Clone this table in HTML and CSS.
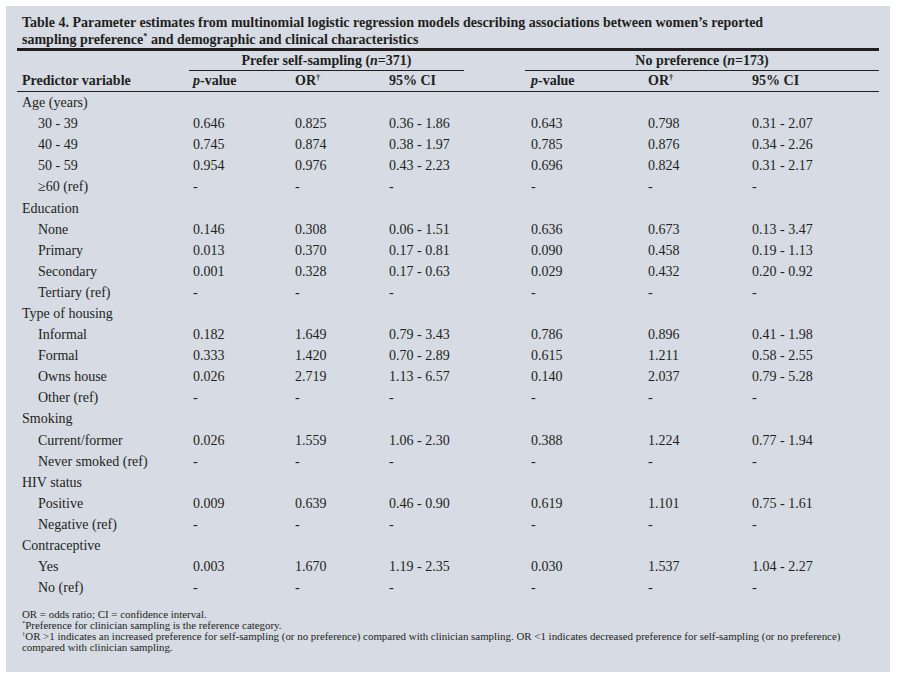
FILE: index.html
```html
<!DOCTYPE html>
<html>
<head>
<meta charset="utf-8">
<link rel="stylesheet" href="styles.css">
</head>
<body>
<div class="panel">
  <h1 class="title">Table 4. Parameter estimates from multinomial logistic regression models describing associations between women’s reported<br>sampling preference<sup>*</sup> and demographic and clinical characteristics</h1>
  <table class="tbl">
    <colgroup>
      <col class="c-label"><col class="c-p1"><col class="c-or1"><col class="c-ci1"><col class="c-gap"><col class="c-p2"><col class="c-or2"><col class="c-ci2">
    </colgroup>
    <thead>
      <tr class="hrow1">
        <th></th>
        <th colspan="3" class="grp"><div class="grp-line g1">Prefer self-sampling (<i>n</i>=371)</div></th>
        <th></th>
        <th colspan="3" class="grp"><div class="grp-line g2">No preference (<i>n</i>=173)</div></th>
      </tr>
      <tr class="hrow2">
        <th class="lbl">Predictor variable</th>
        <th><i>p</i>-value</th>
        <th>OR<sup>†</sup></th>
        <th>95% CI</th>
        <th></th>
        <th class="p2"><i>p</i>-value</th>
        <th>OR<sup>†</sup></th>
        <th>95% CI</th>
      </tr>
    </thead>
    <tbody>
      <tr><td class="lbl">Age (years)</td><td></td><td></td><td></td><td></td><td class="p2"></td><td></td><td></td></tr>
      <tr><td class="sub">30 - 39</td><td>0.646</td><td>0.825</td><td>0.36 - 1.86</td><td></td><td class="p2">0.643</td><td>0.798</td><td>0.31 - 2.07</td></tr>
      <tr><td class="sub">40 - 49</td><td>0.745</td><td>0.874</td><td>0.38 - 1.97</td><td></td><td class="p2">0.785</td><td>0.876</td><td>0.34 - 2.26</td></tr>
      <tr><td class="sub">50 - 59</td><td>0.954</td><td>0.976</td><td>0.43 - 2.23</td><td></td><td class="p2">0.696</td><td>0.824</td><td>0.31 - 2.17</td></tr>
      <tr><td class="sub">≥60 (ref)</td><td>-</td><td>-</td><td>-</td><td></td><td class="p2">-</td><td>-</td><td>-</td></tr>
      <tr><td class="lbl">Education</td><td></td><td></td><td></td><td></td><td class="p2"></td><td></td><td></td></tr>
      <tr><td class="sub">None</td><td>0.146</td><td>0.308</td><td>0.06 - 1.51</td><td></td><td class="p2">0.636</td><td>0.673</td><td>0.13 - 3.47</td></tr>
      <tr><td class="sub">Primary</td><td>0.013</td><td>0.370</td><td>0.17 - 0.81</td><td></td><td class="p2">0.090</td><td>0.458</td><td>0.19 - 1.13</td></tr>
      <tr><td class="sub">Secondary</td><td>0.001</td><td>0.328</td><td>0.17 - 0.63</td><td></td><td class="p2">0.029</td><td>0.432</td><td>0.20 - 0.92</td></tr>
      <tr><td class="sub">Tertiary (ref)</td><td>-</td><td>-</td><td>-</td><td></td><td class="p2">-</td><td>-</td><td>-</td></tr>
      <tr><td class="lbl">Type of housing</td><td></td><td></td><td></td><td></td><td class="p2"></td><td></td><td></td></tr>
      <tr><td class="sub">Informal</td><td>0.182</td><td>1.649</td><td>0.79 - 3.43</td><td></td><td class="p2">0.786</td><td>0.896</td><td>0.41 - 1.98</td></tr>
      <tr><td class="sub">Formal</td><td>0.333</td><td>1.420</td><td>0.70 - 2.89</td><td></td><td class="p2">0.615</td><td>1.211</td><td>0.58 - 2.55</td></tr>
      <tr><td class="sub">Owns house</td><td>0.026</td><td>2.719</td><td>1.13 - 6.57</td><td></td><td class="p2">0.140</td><td>2.037</td><td>0.79 - 5.28</td></tr>
      <tr><td class="sub">Other (ref)</td><td>-</td><td>-</td><td>-</td><td></td><td class="p2">-</td><td>-</td><td>-</td></tr>
      <tr><td class="lbl">Smoking</td><td></td><td></td><td></td><td></td><td class="p2"></td><td></td><td></td></tr>
      <tr><td class="sub">Current/former</td><td>0.026</td><td>1.559</td><td>1.06 - 2.30</td><td></td><td class="p2">0.388</td><td>1.224</td><td>0.77 - 1.94</td></tr>
      <tr><td class="sub">Never smoked (ref)</td><td>-</td><td>-</td><td>-</td><td></td><td class="p2">-</td><td>-</td><td>-</td></tr>
      <tr><td class="lbl">HIV status</td><td></td><td></td><td></td><td></td><td class="p2"></td><td></td><td></td></tr>
      <tr><td class="sub">Positive</td><td>0.009</td><td>0.639</td><td>0.46 - 0.90</td><td></td><td class="p2">0.619</td><td>1.101</td><td>0.75 - 1.61</td></tr>
      <tr><td class="sub">Negative (ref)</td><td>-</td><td>-</td><td>-</td><td></td><td class="p2">-</td><td>-</td><td>-</td></tr>
      <tr><td class="lbl">Contraceptive</td><td></td><td></td><td></td><td></td><td class="p2"></td><td></td><td></td></tr>
      <tr><td class="sub">Yes</td><td>0.003</td><td>1.670</td><td>1.19 - 2.35</td><td></td><td class="p2">0.030</td><td>1.537</td><td>1.04 - 2.27</td></tr>
      <tr><td class="sub">No (ref)</td><td>-</td><td>-</td><td>-</td><td></td><td class="p2">-</td><td>-</td><td>-</td></tr>
    </tbody>
  </table>
  <div class="notes">
    <p>OR = odds ratio; CI = confidence interval.</p>
    <p><sup>*</sup>Preference for clinician sampling is the reference category.</p>
    <p><sup>†</sup>OR &gt;1 indicates an increased preference for self-sampling (or no preference) compared with clinician sampling. OR &lt;1 indicates decreased preference for self-sampling (or no preference)<br>compared with clinician sampling.</p>
  </div>
</div>
</body>
</html>
```

FILE: styles.css
```css
html, body {
  margin: 0;
  padding: 0;
  background: #ffffff;
}

body {
  font-family: "Liberation Serif", "Times New Roman", serif;
  color: #231f20;
}

.panel {
  box-sizing: border-box;
  margin: 6px;
  width: 884px;
  height: 666px;
  background: #d6dbe4;
  padding: 8px 11px 0 11px;
}

.title {
  margin: 0;
  padding-left: 5px;
  font-size: 14px;
  line-height: 17px;
  font-weight: bold;
  height: 34px;
  border-bottom: 3px solid #231f20;
  box-sizing: content-box;
}

.title sup,
.tbl sup,
.notes sup {
  font-size: 0.6em;
  line-height: 0;
  vertical-align: 0.55em;
}

.tbl {
  border-collapse: collapse;
  table-layout: fixed;
  width: 862px;
  font-size: 14px;
}

.c-label { width: 172px; }
.c-p1 { width: 102px; }
.c-or1 { width: 94px; }
.c-ci1 { width: 79px; }
.c-gap { width: 61px; }
.c-p2 { width: 119px; }
.c-or2 { width: 104px; }
.c-ci2 { width: 131px; }

.tbl th,
.tbl td {
  padding: 0 0 0 4px;
  text-align: left;
  white-space: nowrap;
}

.tbl th {
  font-weight: bold;
}

.tbl .lbl { padding-left: 5px; }
.tbl .sub { padding-left: 21px; }
.tbl .p2 { padding-left: 6px; }

.hrow1 th {
  height: 20px;
  padding: 0;
  vertical-align: bottom;
}

.grp-line {
  border-bottom: 1.5px solid #231f20;
  text-align: center;
  line-height: 18px;
  font-weight: bold;
}

.grp-line.g1 { width: 275px; }
.grp-line.g2 { width: 354px; }

.hrow2 th {
  height: 20px;
  line-height: 20px;
  border-bottom: 1.5px solid #231f20;
}

.tbl tbody td {
  height: 21.1px;
  line-height: 21px;
}

.notes {
  margin-top: 11px;
  padding-left: 5px;
  font-size: 10.9px;
  line-height: 11px;
}

.notes p {
  margin: 0;
}
```
